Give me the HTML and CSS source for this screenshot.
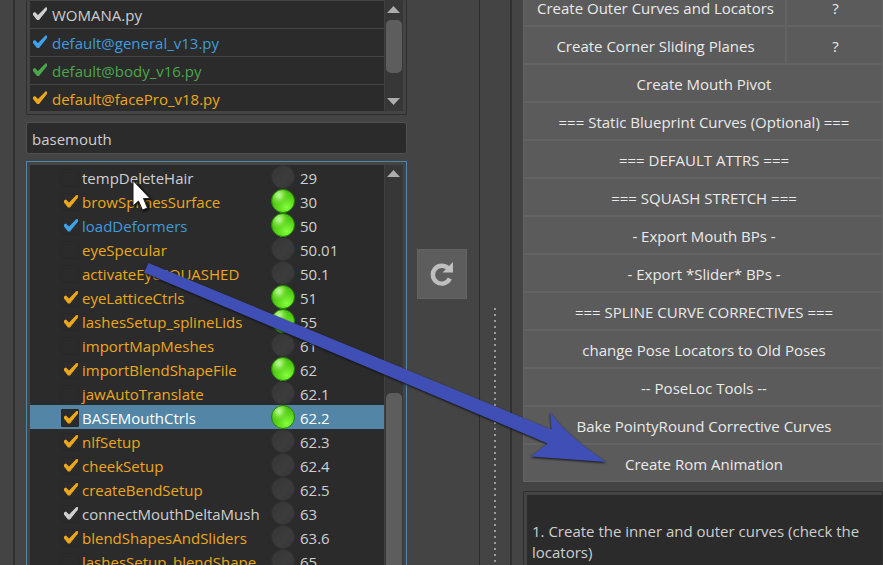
FILE: index.html
```html
<!DOCTYPE html>
<html lang="en">
<head>
<meta charset="utf-8">
<title>Rig Builder</title>
<link rel="stylesheet" href="styles.css">
</head>
<body>
<main class="app">
  <section class="build">
    <div class="lists">
      <div class="frame files">
        <ul class="file-list">
          <li><label><input class="tick" type="checkbox" checked>WOMANA.py</label></li>
          <li class="blue"><label><input class="tick" type="checkbox" checked>default@general_v13.py</label></li>
          <li class="green"><label><input class="tick" type="checkbox" checked>default@body_v16.py</label></li>
          <li class="orange"><label><input class="tick" type="checkbox" checked>default@facePro_v18.py</label></li>
        </ul>
        <div class="scroll"><i class="up"></i><i class="thumb"></i><i class="down"></i></div>
      </div>
      <input class="search" type="text" value="basemouth" aria-label="Filter steps">
      <div class="frame steps">
        <table class="step-table">
          <tbody id="steps"></tbody>
        </table>
        <div class="scroll"><i class="up"></i><i class="thumb"></i></div>
      </div>
    </div>
    <button class="refresh" type="button" aria-label="Refresh">
      <svg width="26" height="26" viewBox="0 0 26 26"><path d="M20 8.500A8.900 8.900 0 1 0 20.800 17.500" fill="none" stroke="currentColor" stroke-width="4.400"/><path d="M24 1V11.500H13.500Z" fill="currentColor"/></svg>
    </button>
  </section>
  <div class="splitter"></div>
  <section class="tools">
    <div class="actions">
      <button type="button">Create Outer Curves and Locators</button><button type="button">?</button>
      <button type="button">Create Corner Sliding Planes</button><button type="button">?</button>
      <button class="wide" type="button">Create Mouth Pivot</button>
      <button class="wide" type="button">=== Static Blueprint Curves (Optional) ===</button>
      <button class="wide" type="button">=== DEFAULT ATTRS ===</button>
      <button class="wide" type="button">=== SQUASH STRETCH ===</button>
      <button class="wide" type="button">- Export Mouth BPs -</button>
      <button class="wide" type="button">- Export *Slider* BPs -</button>
      <button class="wide" type="button">=== SPLINE CURVE CORRECTIVES ===</button>
      <button class="wide" type="button">change Pose Locators to Old Poses</button>
      <button class="wide" type="button">-- PoseLoc Tools --</button>
      <button class="wide" type="button">Bake PointyRound Corrective Curves</button>
      <button class="wide" type="button">Create Rom Animation</button>
    </div>
    <div class="frame notes">
      <textarea readonly aria-label="Notes">&#10;
1. Create the inner and outer curves (check the locators)</textarea>
    </div>
  </section>
</main>
<svg class="overlay" width="883" height="565" viewBox="0 0 883 565" aria-hidden="true">
  <path class="arrow" d="M148.500 263L551.500 429.500L550 412Q566 435 606 462L531 456.500L547.500 443.500L144 272.500Z"/>
  <path class="pointer" d="M133 180.500V206L138.500 201L142.500 210L147.500 208L143.500 198.500H150Z"/>
</svg>
<script src="steps.js"></script>
</body>
</html>
```

FILE: steps.js
```js
// name, order, colour, enabled, has run
const steps = [
  ["tempDeleteHair", "29", "", 0, 0],
  ["browSplinesSurface", "30", "orange", 1, 1],
  ["loadDeformers", "50", "blue", 1, 1],
  ["eyeSpecular", "50.01", "orange", 0, 0],
  ["activateEyeSQUASHED", "50.1", "orange", 0, 0],
  ["eyeLatticeCtrls", "51", "orange", 1, 1],
  ["lashesSetup_splineLids", "55", "orange", 1, 1],
  ["importMapMeshes", "61", "orange", 0, 0],
  ["importBlendShapeFile", "62", "orange", 1, 1],
  ["jawAutoTranslate", "62.1", "orange", 0, 0],
  ["BASEMouthCtrls", "62.2", "orange selected", 1, 1],
  ["nlfSetup", "62.3", "orange", 1, 0],
  ["cheekSetup", "62.4", "orange", 1, 0],
  ["createBendSetup", "62.5", "orange", 1, 0],
  ["connectMouthDeltaMush", "63", "", 1, 0],
  ["blendShapesAndSliders", "63.6", "orange", 1, 0],
  ["lashesSetup_blendShape", "65", "orange", 0, 0]
];
document.getElementById("steps").innerHTML = steps.map(([name, order, tone, on, done]) =>
  `<tr class="${tone}"><td class="name"><label><input class="tick" type="checkbox"${on ? " checked" : ""}>${name}</label></td>` +
  `<td class="state"><span class="orb${done ? " lit" : ""}"></span></td><td class="order">${order}</td></tr>`).join("");
```

FILE: styles.css
```css
* { box-sizing: border-box; }
body {
  margin: 0;
  height: 100vh;
  overflow: hidden;
  position: relative;
  background: #444;
  color: #cfcfcf;
  font: 15px/20px "Open Sans", "Noto Sans", sans-serif;
}
button, input, textarea { font: inherit; color: inherit; margin: 0; }
.app {
  display: grid;
  grid-template-columns: minmax(0, 467fr) 30px minmax(0, 373fr);
  height: 100%;
  padding-left: 13px;
}
.build {
  display: flex;
  gap: 10px;
  padding: 0 12px 0 11px;
  border-left: 2px solid #303030;
  border-right: 1px solid #2c2c2c;
  min-height: 0;
}
.lists { flex: 1; min-width: 0; display: flex; flex-direction: column; }
.frame { border: 1px solid #2e2e2e; border-radius: 2px; display: flex; padding: 3px; }
.files { border-top: 0; padding-top: 0; height: 115px; flex: none; }
.file-list { list-style: none; margin: 0; padding: 0; flex: 1; background: #2b2b2b; border-top: 1px solid #444; }
.file-list li { height: 28px; border-bottom: 1px solid #444; padding: 4px 3px; }
.file-list li:last-child { height: 26px; border: 0; }
label { display: flex; align-items: center; white-space: nowrap; }
.orange { color: #eba81e; }
.blue { color: #3f9bdc; }
.green { color: #4ca64c; }
.tick { appearance: none; flex: none; width: 19px; height: 18px; }
.tick:checked::before {
  content: "";
  display: block;
  width: 14px;
  height: 14px;
  margin-top: 1px;
  background: currentColor;
  clip-path: polygon(0 6px, 2px 5px, 5px 8px, 13px 0, 14px 1px, 14px 3px, 6px 13px, 4px 13px, 0 8px);
}
.scroll { width: 19px; background: #373737; border-left: 1px solid #404040; display: flex; flex-direction: column; align-items: center; padding: 6px 1px 0 0; }
.up, .down { width: 13px; height: 7px; background: #adadad; clip-path: polygon(50% 0, 100% 100%, 0 100%); flex: none; }
.down { clip-path: polygon(0 0, 100% 0, 50% 100%); margin-top: 25px; }
.thumb { width: 16px; height: 53px; margin-top: 7px; background: #5d5d5d; border-radius: 5px; flex: none; }
.search {
  flex: none;
  height: 32px;
  margin: 7px 0;
  padding: 2px 5px 0;
  width: 100%;
  background: #2b2b2b;
  border: 1px solid #505050;
  border-radius: 3px;
}
.steps { flex: 1; min-height: 0; overflow: hidden; border: 1px solid #5285a6; border-bottom: 0; border-radius: 0; padding-bottom: 0; }
.steps .scroll { padding-top: 5px; }
.steps .thumb { margin-top: 216px; height: auto; flex: 1; border-radius: 5px 5px 0 0; }
.step-table { flex: 1; min-width: 0; height: 408px; table-layout: fixed; border-collapse: collapse; background: #2b2b2b; }
.step-table td { padding: 0; height: 24px; }
.step-table .name { padding-left: 31px; overflow: hidden; }
.step-table .state { width: 24px; }
.step-table .order { width: 89px; padding: 1px 0 0 5px; color: #cfcfcf; }
.step-table label { height: 24px; line-height: 22px; padding-top: 1px; }
.step-table .tick { width: 18px; margin-right: 3px; padding: 1px 2px; border-radius: 4px; border: 1px solid #282828; }
.step-table .tick::before { margin-top: 0; }
.step-table .selected { background: #5285a6; color: #fff; }
.step-table .selected .order { color: #fff; }
.selected .tick { background: #2b2b2b; border-radius: 1px; color: #f2ab18; }
.blue .tick { color: #3fa2e8; }
.orb { display: block; width: 24px; height: 24px; border-radius: 50%; background: linear-gradient(135deg, #353535, #3c3c3c 60%, #343434); border: 1px solid #303030; }
.orb.lit { border-color: #238207; background: radial-gradient(ellipse at 32% 24%, #c4ff9e 0, #72dd35 25%, transparent 42%), radial-gradient(circle at 68% 80%, #83ff3b 0, #58d219 45%, #43b90d 75%); }
.refresh {
  flex: none;
  width: 50px;
  height: 50px;
  margin-top: 249px;
  padding: 0;
  display: grid;
  place-items: center;
  background: #5d5d5d;
  border: 1px solid #646464;
  color: #bfbfbf;
}
.splitter { width: 2px; margin: 308px 0 0 14px; background: linear-gradient(#999 2px, transparent 2px) 0 0 / 2px 6px repeat-y; }
.tools { border-left: 2px solid #303030; padding-left: 11px; display: flex; flex-direction: column; min-height: 0; }
.actions { display: grid; grid-template-columns: minmax(0, 263fr) minmax(0, 97fr); grid-auto-rows: 38px; margin-top: -12px; }
.actions button { border: 1px solid #636363; background: #5b5b5b; color: #eaeaea; padding: 2px 0 0 2px; white-space: nowrap; }
.actions .wide { grid-column: 1 / -1; }
.notes { margin-top: 9px; flex: 1; min-height: 0; padding: 3px 0 0 3px; border-bottom: 0; }
.notes textarea { flex: 1; min-width: 0; resize: none; border: 0; outline: 0; padding: 5px; background: #2b2b2b; line-height: 21px; overflow: hidden; }
.overlay { position: absolute; left: 0; top: 0; pointer-events: none; }
.arrow { fill: #3f4fb5; filter: drop-shadow(0 1px 1px #111); }
.pointer { fill: #fff; stroke: #222; stroke-width: 1; filter: drop-shadow(1px 1px 1px #000); }
```
